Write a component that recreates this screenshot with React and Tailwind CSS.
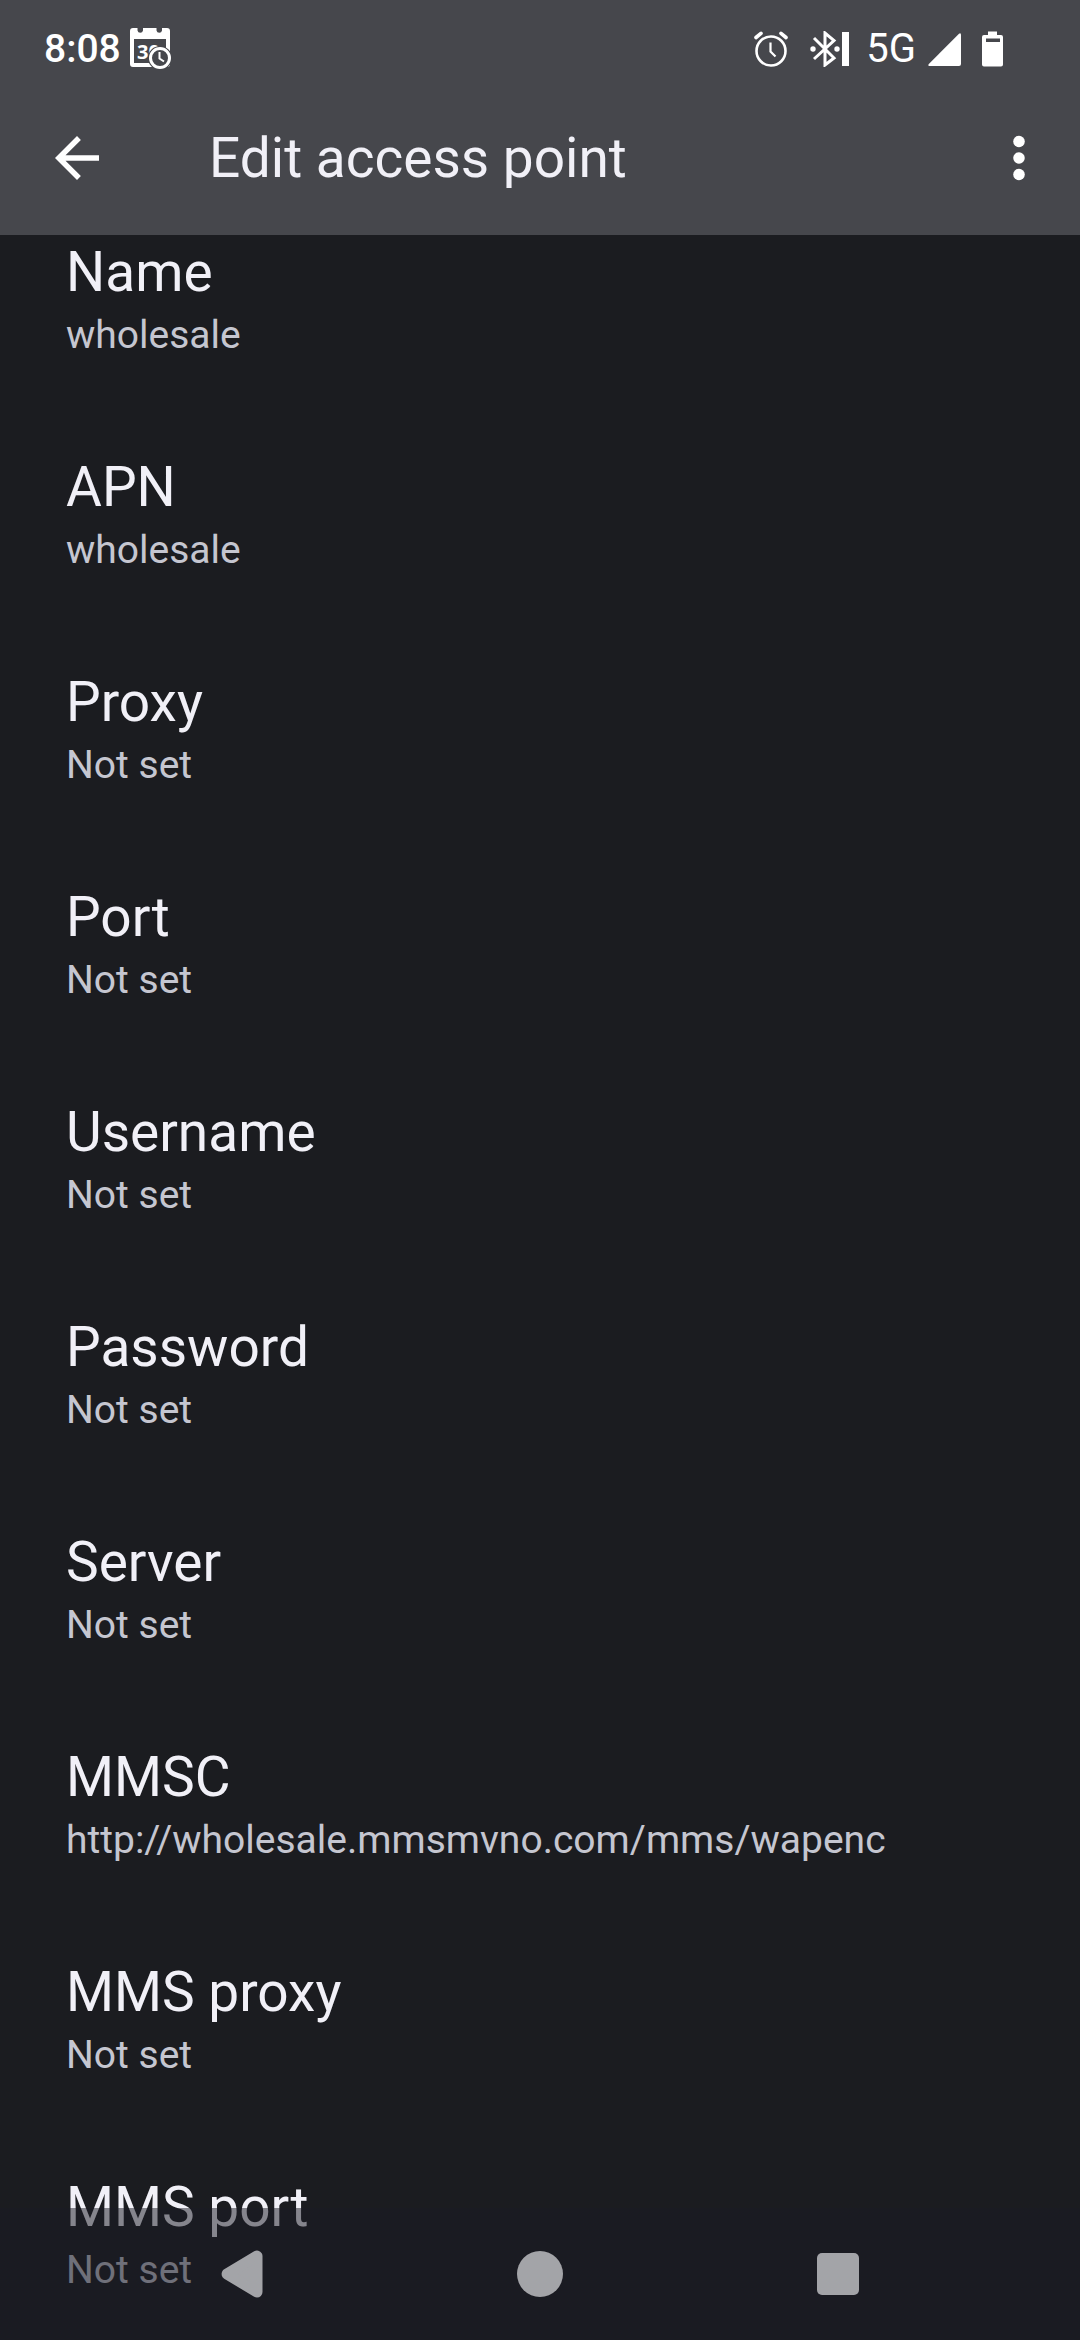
const settings = [
  { title: 'Name', value: 'wholesale' },
  { title: 'APN', value: 'wholesale' },
  { title: 'Proxy', value: 'Not set' },
  { title: 'Port', value: 'Not set' },
  { title: 'Username', value: 'Not set' },
  { title: 'Password', value: 'Not set' },
  { title: 'Server', value: 'Not set' },
  { title: 'MMSC', value: 'http://wholesale.mmsmvno.com/mms/wapenc' },
  { title: 'MMS proxy', value: 'Not set' },
  { title: 'MMS port', value: 'Not set' },
]

function CalendarIcon() {
  return (
    <svg viewBox="0 0 42 42" className="h-[42px] w-[42px]" aria-hidden="true">
      <path
        fill="#fff"
        fillRule="evenodd"
        d="M3 0H7.500V2.500A2.800 2.800 0 0 0 13 2.500V0H26.500V2.500A2.800 2.800 0 0 0 32 2.500V0H37A3 3 0 0 1 40 3V36A3 3 0 0 1 37 39H3A3 3 0 0 1 0 36V3A3 3 0 0 1 3 0ZM4 11V35H36V11Z"
      />
      <text x="7" y="31" fill="#fff" fontSize="20" fontWeight="700" fontFamily="Open Sans, sans-serif">30</text>
      <circle cx="30" cy="30" r="12" fill="#46474c" />
      <circle cx="30" cy="30" r="9.500" fill="#46474c" stroke="#fff" strokeWidth="3" />
      <path d="M29.500 24V30.500L34 33.500" fill="none" stroke="#fff" strokeWidth="2" />
    </svg>
  )
}

function AlarmIcon() {
  return (
    <svg viewBox="0 0 34 36" className="h-9 w-[34px]" fill="none" stroke="#fff" aria-hidden="true">
      <circle cx="17" cy="20" r="14.500" strokeWidth="2.600" />
      <path d="M16.500 11.500V20.500L21.500 25.500" strokeWidth="2.200" />
      <path d="M2 6.500L7 2.300M32 6.500L27 2.300" strokeWidth="3.600" strokeLinecap="round" />
    </svg>
  )
}

function BluetoothIcon() {
  return (
    <svg viewBox="0 0 40 36" className="h-9 w-10" fill="none" stroke="#fff" aria-hidden="true">
      <path d="M4 7L24 27L15 34V2L24 9.500L4 28" strokeWidth="3" />
      <circle cx="3" cy="18" r="2.700" fill="#fff" stroke="none" />
      <circle cx="27" cy="18" r="2.700" fill="#fff" stroke="none" />
      <path d="M35.500 1V35" strokeWidth="7" />
    </svg>
  )
}

function SignalIcon() {
  return (
    <svg viewBox="0 0 34 36" className="h-9 w-[34px]" fill="#fff" aria-hidden="true">
      <path d="M0.800 33L31 2.800Q33 1.500 33 4V33Q33 35 31 35H1.500Q-0.500 35 0.800 33Z" />
    </svg>
  )
}

function BatteryIcon() {
  return (
    <svg viewBox="0 0 22 36" className="h-9 w-[22px]" fill="#fff" aria-hidden="true">
      <path
        fillRule="evenodd"
        d="M6 0.500H15V4H19A2 2 0 0 1 21 6V33.500A2 2 0 0 1 19 35.500H2A2 2 0 0 1 0 33.500V6A2 2 0 0 1 2 4H6ZM4 7.500V11H18V7.500Z"
      />
    </svg>
  )
}

function StatusBar() {
  return (
    <div className="flex h-[81px] items-center justify-between pr-[76px] pl-11 pt-4 text-[39px] leading-[46px] font-medium text-white">
      <div className="flex items-center gap-[9px]">
        <time>8:08</time>
        <CalendarIcon />
      </div>
      <div className="flex items-center">
        <AlarmIcon />
        <div className="ml-[22px]"><BluetoothIcon /></div>
        <span className="ml-4 text-[40px] font-normal">5G</span>
        <div className="ml-3"><SignalIcon /></div>
        <div className="ml-5"><BatteryIcon /></div>
      </div>
    </div>
  )
}

function NavBar() {
  return (
    <nav className="fixed inset-x-0 bottom-0 flex h-[132px] items-center justify-center gap-[232px] bg-[#1a1a24]/50 text-[#a3a4a8]">
      <button aria-label="Back">
        <svg viewBox="0 0 66 66" className="h-[66px] w-[66px]" fill="currentColor" stroke="currentColor">
          <path d="M18 33L48 15V51Z" strokeWidth="11" strokeLinejoin="round" />
        </svg>
      </button>
      <button aria-label="Home">
        <svg viewBox="0 0 66 66" className="h-[66px] w-[66px]" fill="currentColor">
          <circle cx="33" cy="33" r="23" />
        </svg>
      </button>
      <button aria-label="Recent apps">
        <svg viewBox="0 0 66 66" className="h-[66px] w-[66px]" fill="currentColor">
          <rect x="12" y="12" width="42" height="42" rx="5" />
        </svg>
      </button>
    </nav>
  )
}

export default function App() {
  return (
    <div className="flex h-screen flex-col bg-[#1b1c20] font-[Roboto,sans-serif] text-[#f1f0f7]">
      <header className="shrink-0 bg-[#46474c]">
        <StatusBar />
        <div className="flex h-[154px] items-center pr-7 pl-11">
          <button aria-label="Navigate up">
            <svg viewBox="0 0 24 24" className="h-[66px] w-[66px]" fill="#fff">
              <path d="M20 11H7.830l5.590-5.590L12 4l-8 8 8 8 1.410-1.410L7.830 13H20v-2z" />
            </svg>
          </button>
          <h1 className="ml-[99px] flex-1 text-[55px] leading-[64px]">Edit access point</h1>
          <button aria-label="More options">
            <svg viewBox="0 0 24 24" className="h-[66px] w-[66px]" fill="#fff">
              <circle cx="12" cy="6" r="2.100" />
              <circle cx="12" cy="12" r="2.100" />
              <circle cx="12" cy="18" r="2.100" />
            </svg>
          </button>
        </div>
      </header>

      <main className="min-h-0 flex-1 overflow-hidden">
        <ul className="flex flex-col gap-[97px] px-[66px] pt-[5px]">
          {settings.map((s) => (
            <li key={s.title}>
              <h2 className="text-[55px] leading-[64px]">{s.title}</h2>
              <p className="mt-2 text-[39px] leading-[46px] text-[#c5c6d0]">{s.value}</p>
            </li>
          ))}
        </ul>
      </main>

      <NavBar />
    </div>
  )
}
